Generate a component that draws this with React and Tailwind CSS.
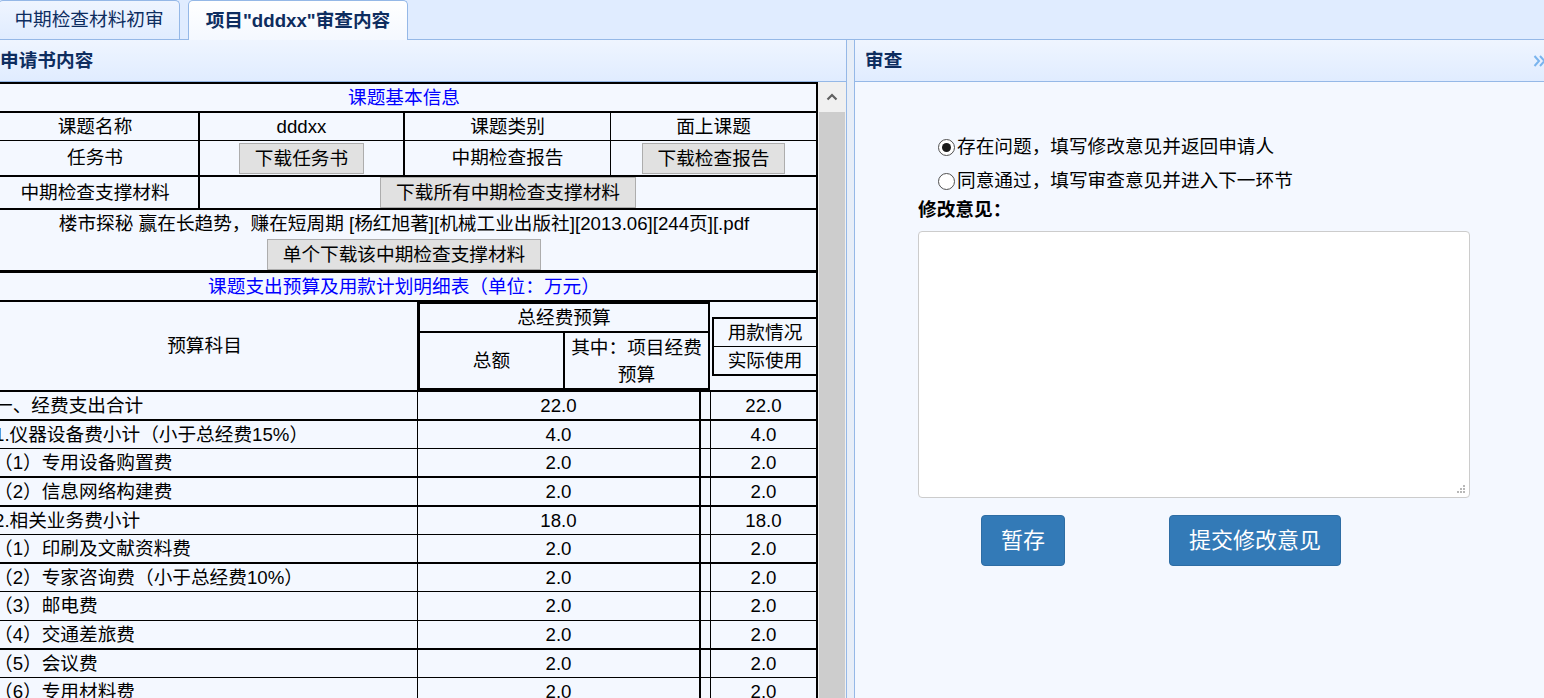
import React from 'react';

const budgetRows = [
  { name: '一、经费支出合计', total: '22.0', used: '22.0', cls: 'h-[29px] border-b-2' },
  { name: '1.仪器设备费小计（小于总经费15%）', total: '4.0', used: '4.0', cls: 'h-[28px] border-b' },
  { name: '（1）专用设备购置费', total: '2.0', used: '2.0', cls: 'h-[29px] border-b-2' },
  { name: '（2）信息网络构建费', total: '2.0', used: '2.0', cls: 'h-[29px] border-b-2' },
  { name: '2.相关业务费小计', total: '18.0', used: '18.0', cls: 'h-[28px] border-b' },
  { name: '（1）印刷及文献资料费', total: '2.0', used: '2.0', cls: 'h-[29px] border-b-2' },
  { name: '（2）专家咨询费（小于总经费10%）', total: '2.0', used: '2.0', cls: 'h-[28px] border-b' },
  { name: '（3）邮电费', total: '2.0', used: '2.0', cls: 'h-[29px] border-b' },
  { name: '（4）交通差旅费', total: '2.0', used: '2.0', cls: 'h-[29px] border-b-2' },
  { name: '（5）会议费', total: '2.0', used: '2.0', cls: 'h-[28px] border-b' },
  { name: '（6）专用材料费', total: '2.0', used: '2.0', cls: 'h-[29px] border-b' },
];

const GrayBtn = ({ children }) => (
  <button className="h-[31px] px-[15px] border border-[#adadad] bg-[#e1e1e1] text-black leading-[29px] whitespace-nowrap">
    {children}
  </button>
);

const Radio = ({ checked, label }) => (
  <div className="flex items-center h-[34px]">
    <span className="w-[17px] h-[17px] rounded-full border border-[#505050] bg-white flex items-center justify-center">
      {checked && <span className="w-[9px] h-[9px] rounded-full bg-[#1a1a1a]" />}
    </span>
    <span className="ml-[2px]">{label}</span>
  </div>
);

const ApplicationTable = () => (
  <div className="-ml-[10px] w-[828px] border-2 border-black text-black">
    {/* 课题基本信息 */}
    <div className="h-[29px] border-b-2 border-black text-center text-[#0000ff] leading-[27px]">课题基本信息</div>

    <div className="flex h-[28px] border-b border-black text-center leading-[27px]">
      <div className="w-[208px] border-r-2 border-black">课题名称</div>
      <div className="w-[205px] border-r-2 border-black">dddxx</div>
      <div className="w-[206px] border-r border-black">课题类别</div>
      <div className="flex-1">面上课题</div>
    </div>

    <div className="flex h-[36px] border-b-2 border-black">
      <div className="w-[208px] border-r-2 border-black flex items-center justify-center">任务书</div>
      <div className="w-[205px] border-r-2 border-black flex items-center justify-center">
        <GrayBtn>下载任务书</GrayBtn>
      </div>
      <div className="w-[206px] border-r border-black flex items-center justify-center">中期检查报告</div>
      <div className="flex-1 flex items-center justify-center">
        <GrayBtn>下载检查报告</GrayBtn>
      </div>
    </div>

    <div className="flex h-[33px] border-b-2 border-black">
      <div className="w-[208px] border-r-2 border-black flex items-center justify-center">中期检查支撑材料</div>
      <div className="flex-1 flex items-center justify-center">
        <GrayBtn>下载所有中期检查支撑材料</GrayBtn>
      </div>
    </div>

    <div className="h-[63px] border-b-[3px] border-black flex flex-col items-center">
      <div className="leading-[27px] whitespace-nowrap">楼市探秘 赢在长趋势，赚在短周期 [杨红旭著][机械工业出版社][2013.06][244页][.pdf</div>
      <div className="mt-[2px]">
        <GrayBtn>单个下载该中期检查支撑材料</GrayBtn>
      </div>
    </div>

    {/* 预算表 */}
    <div className="h-[29px] border-b-2 border-black text-center text-[#0000ff] leading-[27px]">课题支出预算及用款计划明细表（单位：万元）</div>

    <div className="flex h-[90px] border-b-2 border-black">
      <div className="w-[426px] border-r border-black flex items-center justify-center">预算科目</div>
      <div className="w-[292px] border-2 border-black flex flex-col">
        <div className="h-[29px] border-b-2 border-black text-center leading-[27px]">总经费预算</div>
        <div className="flex-1 flex">
          <div className="w-[145px] border-r-2 border-black flex items-center justify-center">总额</div>
          <div className="flex-1 flex items-center justify-center text-center leading-[27px] px-[2px]">其中：项目经费预算</div>
        </div>
      </div>
      <div className="flex-1 flex flex-col justify-center pl-[2px]">
        <div className="border-2 border-r-0 border-black text-center leading-[27px]">
          <div className="h-[28px] border-b border-black">用款情况</div>
          <div className="h-[27px]">实际使用</div>
        </div>
      </div>
    </div>

    {budgetRows.map((r, i) => (
      <div key={i} className={`flex border-black ${r.cls}`}>
        <div className="w-[426px] border-r border-black flex items-center pl-[2px] whitespace-nowrap">{r.name}</div>
        <div className="w-[283px] border-r-2 border-black flex items-center justify-center">{r.total}</div>
        <div className="w-[10px] border-r border-black" />
        <div className="flex-1 flex items-center justify-center">{r.used}</div>
      </div>
    ))}
  </div>
);

export default function App() {
  return (
    <div className="w-[1544px] h-[698px] overflow-hidden bg-[#e0ecff] font-['Liberation_Sans','Noto_Sans_CJK_SC',sans-serif] text-[18.67px] flex flex-col">
      {/* Tabs */}
      <div className="h-[40px] shrink-0 flex items-end border-b border-[#95b8e7]">
        <div className="-ml-[2px] w-[182px] h-[39px] rounded-t-[5px] border border-b-0 border-[#95b8e7] bg-gradient-to-b from-[#eff5ff] to-[#e0ecff] flex items-center justify-center text-[#0e2d5f]">
          中期检查材料初审
        </div>
        <div className="ml-[8px] w-[220px] h-[40px] -mb-px rounded-t-[5px] border border-b-0 border-[#95b8e7] bg-gradient-to-b from-white to-[#f4f8ff] flex items-center justify-center font-bold text-[#0e2d5f]">
          项目"dddxx"审查内容
        </div>
      </div>

      <div className="flex-1 flex min-h-0">
        {/* Left panel */}
        <div className="w-[847px] border-r border-[#95b8e7] flex flex-col">
          <div className="h-[42px] shrink-0 border-b border-[#95b8e7] bg-gradient-to-b from-[#eff5ff] to-[#e0ecff] flex items-center font-bold text-[#0e2d5f]">
            申请书内容
          </div>
          <div className="flex-1 flex min-h-0 bg-[#f4f8ff]">
            <div className="w-[818px] overflow-hidden">
              <ApplicationTable />
            </div>
            <div className="w-[28px] flex flex-col bg-[#f0f0f0]">
              <div className="h-[30px] flex items-center justify-center">
                <svg width="12" height="8" viewBox="0 0 12 8">
                  <polyline points="1.5,6.5 6,2 10.5,6.5" fill="none" stroke="#606060" strokeWidth="2.2" />
                </svg>
              </div>
              <div className="flex-1 mx-[1px] bg-[#cdcdcd]" />
            </div>
          </div>
        </div>

        {/* Splitter */}
        <div className="w-[7px] bg-[#e7eef8]" />

        {/* Right panel */}
        <div className="flex-1 border-l border-[#95b8e7] flex flex-col">
          <div className="h-[42px] shrink-0 border-b border-[#95b8e7] bg-gradient-to-b from-[#eff5ff] to-[#e0ecff] flex items-center justify-between pl-[10px] font-bold text-[#0e2d5f]">
            <span>审查</span>
            <svg width="14" height="16" viewBox="0 0 14 16" className="-mr-[3px]">
              <polyline points="1.5,3 6,8 1.5,13" fill="none" stroke="#7ab4ee" strokeWidth="2" />
              <polyline points="7,3 11.5,8 7,13" fill="none" stroke="#7ab4ee" strokeWidth="2" />
            </svg>
          </div>
          <div className="flex-1 bg-[#f4f8ff] pt-[48px] pl-[63px] text-black">
            <div className="pl-[20px]">
              <Radio checked label="存在问题，填写修改意见并返回申请人" />
              <Radio label="同意通过，填写审查意见并进入下一环节" />
            </div>
            <div className="font-bold leading-[24px]">修改意见：</div>
            <div className="relative mt-[9px] w-[552px] h-[267px]">
              <textarea className="w-full h-full resize-none rounded-[4px] border border-[#cccccc] bg-white outline-none" defaultValue="" />
              <svg width="10" height="10" viewBox="0 0 10 10" className="absolute right-[4px] bottom-[4px]">
                <rect x="7" y="1" width="2" height="2" fill="#b8b8b8" />
                <rect x="4" y="4" width="2" height="2" fill="#b8b8b8" />
                <rect x="7" y="4" width="2" height="2" fill="#b8b8b8" />
                <rect x="1" y="7" width="2" height="2" fill="#b8b8b8" />
                <rect x="4" y="7" width="2" height="2" fill="#b8b8b8" />
                <rect x="7" y="7" width="2" height="2" fill="#b8b8b8" />
              </svg>
            </div>
            <div className="mt-[17px] flex pl-[63px]">
              <button className="w-[84px] h-[51px] rounded-[4px] border border-[#2e6da4] bg-[#337ab7] text-white text-[22px]">暂存</button>
              <button className="ml-[104px] w-[172px] h-[51px] rounded-[4px] border border-[#2e6da4] bg-[#337ab7] text-white text-[22px]">提交修改意见</button>
            </div>
          </div>
        </div>
      </div>
    </div>
  );
}
